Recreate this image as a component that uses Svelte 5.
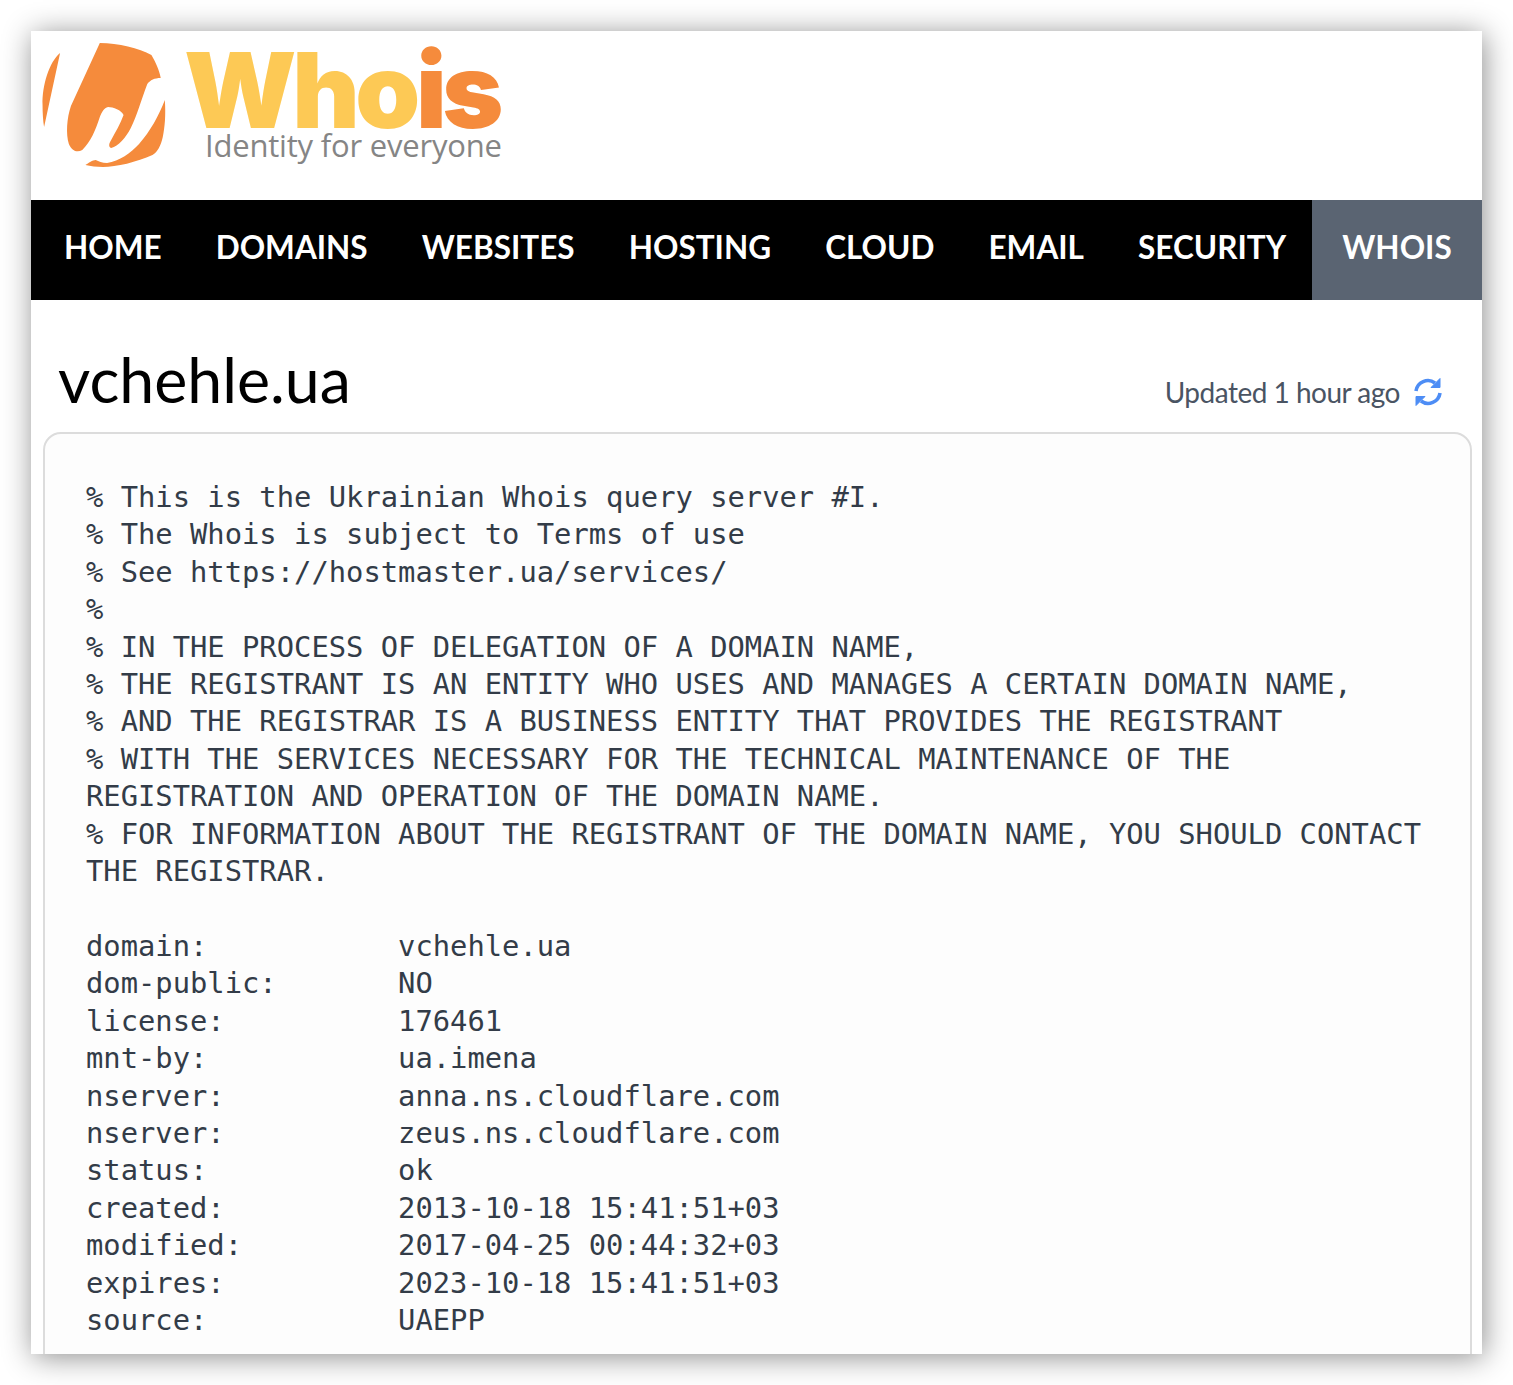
<script>
	const navItems = ["HOME", "DOMAINS", "WEBSITES", "HOSTING", "CLOUD", "EMAIL", "SECURITY"];

	const whoisText = `% This is the Ukrainian Whois query server #I.
% The Whois is subject to Terms of use
% See https://hostmaster.ua/services/
%
% IN THE PROCESS OF DELEGATION OF A DOMAIN NAME,
% THE REGISTRANT IS AN ENTITY WHO USES AND MANAGES A CERTAIN DOMAIN NAME,
% AND THE REGISTRAR IS A BUSINESS ENTITY THAT PROVIDES THE REGISTRANT
% WITH THE SERVICES NECESSARY FOR THE TECHNICAL MAINTENANCE OF THE REGISTRATION AND OPERATION OF THE DOMAIN NAME.
% FOR INFORMATION ABOUT THE REGISTRANT OF THE DOMAIN NAME, YOU SHOULD CONTACT THE REGISTRAR.

domain:           vchehle.ua
dom-public:       NO
license:          176461
mnt-by:           ua.imena
nserver:          anna.ns.cloudflare.com
nserver:          zeus.ns.cloudflare.com
status:           ok
created:          2013-10-18 15:41:51+03
modified:         2017-04-25 00:44:32+03
expires:          2023-10-18 15:41:51+03
source:           UAEPP`;
</script>

<div class="page">
	<div class="window">
		<header class="brand">
			<svg class="mark" viewBox="40 40 125 130" preserveAspectRatio="none" aria-hidden="true">
				<path d="M58.5 53C48 62 41 85 41.5 105C41.5 113 42 121 43 127Z" />
				<path d="M97 43C115 43 135 48 147 55C151 62 155 71 156 78C150 78 146 80 143 84C137 100 133 116 127 128C122 138 115 146 108 148C105 147 106 143 108 140C112 132 117 124 120 115C118 110 110 107 105 107C101 108 99 112 97 117C93 130 88 142 80 150C75 153 70 151 67 144C64 134 65 118 69 106Z" />
				<path d="M160 100C161 115 160 127 158 137C156 146 153 152 148 155C133 162 113 167 100 167C94 167 88 166 83 165C86 163 90 160 93 160C96 161 99 163 104 163C116 161 127 153 135 144C146 131 154 116 160 100Z" />
			</svg>
			<div class="wordmark">
				<div class="name"><span class="yellow">Who</span><span class="orange">is</span></div>
				<div class="tagline">Identity for everyone</div>
			</div>
		</header>

		<nav class="nav">
			<ul>
				{#each navItems as item}
					<li>{item}</li>
				{/each}
			</ul>
			<div class="active">WHOIS</div>
		</nav>

		<div class="title-row">
			<h1>vchehle.ua</h1>
			<div class="updated">
				<span>Updated 1 hour ago</span>
				<svg class="refresh" viewBox="0 0 30 30" aria-hidden="true">
					<g>
						<path class="arc" d="M3 14A12 12 0 0 1 22 6" />
						<polygon class="head" points="27,1.5 27,10.5 18,10.5" />
					</g>
					<g transform="rotate(180 15 15)">
						<path class="arc" d="M3 14A12 12 0 0 1 22 6" />
						<polygon class="head" points="27,1.5 27,10.5 18,10.5" />
					</g>
				</svg>
			</div>
		</div>

		<div class="panel">
			<pre>{whoisText}</pre>
		</div>
	</div>
</div>

<style>
	:global(body) {
		margin: 0;
		background: #fff;
	}

	.page {
		height: 1385px;
		padding: 31px 31px 0;
		box-sizing: border-box;
		overflow: hidden;
	}

	.window {
		height: 1323px;
		background: #fff;
		overflow: hidden;
		box-shadow: 2px 3px 28px rgba(0, 0, 0, 0.45);
	}

	.brand {
		height: 169px;
		display: flex;
		align-items: flex-start;
		padding: 9px 0 0 10px;
		box-sizing: border-box;
		background: #fff;
	}

	.mark {
		width: 129px;
		height: 130px;
		flex: none;
		fill: #f58b3c;
	}

	.wordmark {
		margin-left: 14px;
		margin-top: -2px;
	}

	.name {
		font-family: Inter, sans-serif;
		font-weight: 900;
		font-size: 104px;
		line-height: 104px;
		letter-spacing: -4.4px;
	}

	.yellow {
		color: #fdc955;
	}

	.orange {
		color: #f58b3c;
	}

	.tagline {
		margin: -14px 0 0 21px;
		font-family: "Open Sans", sans-serif;
		font-weight: 400;
		font-size: 31px;
		line-height: 34px;
		letter-spacing: -0.2px;
		color: #858585;
		white-space: nowrap;
	}

	.nav {
		height: 100px;
		padding-bottom: 6px;
		box-sizing: border-box;
		background: #000;
		display: flex;
		justify-content: space-between;
		font-family: Lato, sans-serif;
		font-weight: 700;
		font-size: 31.5px;
		color: #fff;
	}

	.nav ul {
		display: flex;
		gap: 54.1px;
		list-style: none;
		margin: 0;
		padding: 0 0 0 33px;
		align-items: center;
	}

	.active {
		width: 170px;
		margin-bottom: -6px;
		padding-bottom: 6px;
		background: #5a6472;
		display: flex;
		align-items: center;
		justify-content: center;
	}

	.title-row {
		height: 132px;
		display: flex;
		justify-content: space-between;
		align-items: flex-end;
		padding: 0 39px 23px 27px;
		box-sizing: border-box;
	}

	h1 {
		margin: 0 0 -6px;
		font-family: Lato, sans-serif;
		font-weight: 400;
		font-size: 62.6px;
		line-height: 72px;
		color: #000;
	}

	.updated {
		display: flex;
		align-items: center;
		gap: 13px;
		font-family: Lato, sans-serif;
		font-size: 28px;
		letter-spacing: -0.5px;
		color: #4a5463;
	}

	.refresh {
		width: 30px;
		height: 30px;
	}

	.arc {
		fill: none;
		stroke: #4d8df5;
		stroke-width: 3.6;
	}

	.head {
		fill: #4d8df5;
		stroke: #4d8df5;
		stroke-width: 1;
		stroke-linejoin: round;
	}

	.panel {
		margin: 0 10px 0 12px;
		padding: 45px 41px 0;
		background: #fdfdfd;
		border: 2px solid #dcdcdc;
		border-radius: 18px;
		height: 1100px;
		box-sizing: border-box;
	}

	pre {
		margin: 0;
		font-family: "DejaVu Sans Mono", monospace;
		font-size: 28.8px;
		line-height: 37.4px;
		color: #333c48;
		white-space: pre-wrap;
	}
</style>
